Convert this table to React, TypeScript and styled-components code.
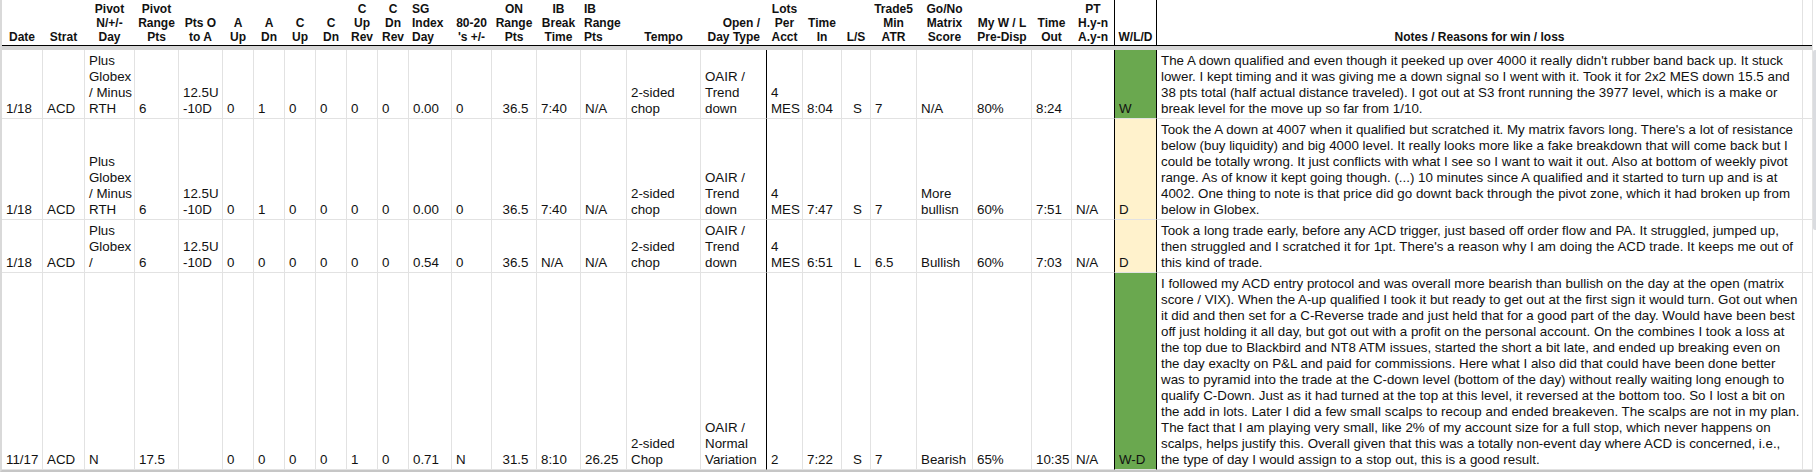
import React from "react";
import styled, { createGlobalStyle } from "styled-components";

type Align = "left" | "center" | "right";
type Edge = "grid" | "black" | "none";

interface Column {
  key: string;
  width: number;
  head: string[];
  headAlign?: Align;
  align?: Align;
  edge?: Edge; // right border in body rows
  headEdge?: Edge; // right border in the header row
}

interface Trade {
  height: number;
  result: "win" | "draw";
  cells: Record<string, string>;
}

const GRID = "#e2e2e2";

const columns: Column[] = [
  { key: "date", width: 41, head: ["Date"] },
  { key: "strat", width: 42, head: ["Strat"] },
  { key: "pivot", width: 50, head: ["Pivot", "N/+/-", "Day"] },
  { key: "pivotRange", width: 44, head: ["Pivot", "Range", "Pts"] },
  { key: "ptsO", width: 44, head: ["Pts O", "to A"] },
  { key: "aUp", width: 31, head: ["A", "Up"] },
  { key: "aDn", width: 31, head: ["A", "Dn"] },
  { key: "cUp", width: 31, head: ["C", "Up"] },
  { key: "cDn", width: 31, head: ["C", "Dn"] },
  { key: "cUpRev", width: 31, head: ["C", "Up", "Rev"] },
  { key: "cDnRev", width: 31, head: ["C", "Dn", "Rev"] },
  { key: "sg", width: 43, head: ["SG", "Index", "Day"], headAlign: "left" },
  { key: "eighty", width: 40, head: ["80-20", "'s +/-"] },
  { key: "on", width: 45, head: ["ON", "Range", "Pts"], align: "center" },
  { key: "ibBreak", width: 44, head: ["IB", "Break", "Time"] },
  { key: "ibRange", width: 46, head: ["IB", "Range", "Pts"], headAlign: "left" },
  { key: "tempo", width: 74, head: ["Tempo"] },
  { key: "open", width: 66, head: ["Open /", "Day Type"], headAlign: "right", edge: "black" },
  { key: "lots", width: 36, head: ["Lots", "Per", "Acct"] },
  { key: "timeIn", width: 39, head: ["Time", "In"] },
  { key: "ls", width: 29, head: ["L/S"], align: "center" },
  { key: "trade5", width: 46, head: ["Trade5", "Min", "ATR"] },
  { key: "goNo", width: 56, head: ["Go/No", "Matrix", "Score"] },
  { key: "myWL", width: 59, head: ["My W / L", "Pre-Disp"] },
  { key: "timeOut", width: 40, head: ["Time", "Out"] },
  { key: "pt", width: 43, head: ["PT", "H.y-n", "A.y-n"], edge: "black", headEdge: "black" },
  { key: "wld", width: 42, head: ["W/L/D"], edge: "black", headEdge: "black" },
  { key: "notes", width: 646, head: ["Notes / Reasons for win / loss"], headEdge: "grid" },
];

const template = `${columns.map((c) => `${c.width}px`).join(" ")} 9px`;

const trades: Trade[] = [
  {
    height: 69,
    result: "win",
    cells: {
      date: "1/18", strat: "ACD", pivot: "Plus Globex / Minus RTH", pivotRange: "6",
      ptsO: "12.5U -10D", aUp: "0", aDn: "1", cUp: "0", cDn: "0", cUpRev: "0", cDnRev: "0",
      sg: "0.00", eighty: "0", on: "36.5", ibBreak: "7:40", ibRange: "N/A",
      tempo: "2-sided chop", open: "OAIR / Trend down", lots: "4 MES", timeIn: "8:04",
      ls: "S", trade5: "7", goNo: "N/A", myWL: "80%", timeOut: "8:24", pt: "", wld: "W",
      notes:
        "The A down qualified and even though it peeked up over 4000 it really didn't rubber band back up. It stuck lower. I kept timing and it was giving me a down signal so I went with it. Took it for 2x2 MES down 15.5 and 38 pts total (half actual distance traveled). I got out at S3 front running the 3977 level, which is a make or break level for the move up so far from 1/10.",
    },
  },
  {
    height: 101,
    result: "draw",
    cells: {
      date: "1/18", strat: "ACD", pivot: "Plus Globex / Minus RTH", pivotRange: "6",
      ptsO: "12.5U -10D", aUp: "0", aDn: "1", cUp: "0", cDn: "0", cUpRev: "0", cDnRev: "0",
      sg: "0.00", eighty: "0", on: "36.5", ibBreak: "7:40", ibRange: "N/A",
      tempo: "2-sided chop", open: "OAIR / Trend down", lots: "4 MES", timeIn: "7:47",
      ls: "S", trade5: "7", goNo: "More bullisn", myWL: "60%", timeOut: "7:51", pt: "N/A", wld: "D",
      notes:
        "Took the A down at 4007 when it qualified but scratched it. My matrix favors long. There's a lot of resistance below (buy liquidity) and big 4000 level. It really looks more like a fake breakdown that will come back but I could be totally wrong. It just conflicts with what I see so I want to wait it out. Also at bottom of weekly pivot range. As of know it kept going though. (...) 10 minutes since A qualified and it started to turn up and is at 4002. One thing to note is that price did go downt back through the pivot zone, which it had broken up from below in Globex.",
    },
  },
  {
    height: 53,
    result: "draw",
    cells: {
      date: "1/18", strat: "ACD", pivot: "Plus Globex /", pivotRange: "6",
      ptsO: "12.5U -10D", aUp: "0", aDn: "0", cUp: "0", cDn: "0", cUpRev: "0", cDnRev: "0",
      sg: "0.54", eighty: "0", on: "36.5", ibBreak: "N/A", ibRange: "N/A",
      tempo: "2-sided chop", open: "OAIR / Trend down", lots: "4 MES", timeIn: "6:51",
      ls: "L", trade5: "6.5", goNo: "Bullish", myWL: "60%", timeOut: "7:03", pt: "N/A", wld: "D",
      notes:
        "Took a long trade early, before any ACD trigger, just based off order flow and PA. It struggled, jumped up, then struggled and I scratched it for 1pt. There's a reason why I am doing the ACD trade. It keeps me out of this kind of trade.",
    },
  },
  {
    height: 197,
    result: "win",
    cells: {
      date: "11/17", strat: "ACD", pivot: "N", pivotRange: "17.5",
      ptsO: "", aUp: "0", aDn: "0", cUp: "0", cDn: "0", cUpRev: "1", cDnRev: "0",
      sg: "0.71", eighty: "N", on: "31.5", ibBreak: "8:10", ibRange: "26.25",
      tempo: "2-sided Chop", open: "OAIR / Normal Variation", lots: "2", timeIn: "7:22",
      ls: "S", trade5: "7", goNo: "Bearish", myWL: "65%", timeOut: "10:35", pt: "N/A", wld: "W-D",
      notes:
        "I followed my ACD entry protocol and was overall more bearish than bullish on the day at the open (matrix score / VIX). When the A-up qualified I took it but ready to get out at the first sign it would turn. Got out when it did and then set for a C-Reverse trade and just held that for a good part of the day. Would have been best off just holding it all day, but got out with a profit on the personal account. On the combines I took a loss at the top due to Blackbird and NT8 ATM issues, started the short a bit late, and ended up breaking even on the day exaclty on P&L and paid for commissions. Here what I also did that could have been done better was to pyramid into the trade at the C-down level (bottom of the day) without really waiting long enough to qualify C-Down. Just as it had turned at the top at this level, it reversed at the bottom too. So I lost a bit on the add in lots. Later I did a few small scalps to recoup and ended breakeven. The scalps are not in my plan. The fact that I am playing very small, like 2% of my account size for a full stop, which never happens on scalps, helps justify this. Overall given that this was a totally non-event day where ACD is concerned, i.e., the type of day I would assign to a stop out, this is a good result.",
    },
  },
];

const resultFill = { win: "#6aa84f", draw: "#fff2cc" };

const edgeColor = (edge: Edge) =>
  edge === "black" ? "#000" : edge === "grid" ? GRID : "transparent";

const GlobalStyle = createGlobalStyle`
  * { box-sizing: border-box; }
  html, body {
    margin: 0;
    background: #fff;
  }
  body {
    font-family: "Liberation Sans", Arial, sans-serif;
    font-size: 10pt;
    color: #111;
  }
`;

const Page = styled.div`
  display: flex;
  width: 1816px;
  height: 472px;
  overflow: hidden;
  background: #fff;
`;

const Sheet = styled.div`
  display: flex;
  flex-direction: column;
  width: 1812px;
  border-left: 2px solid #d9d9d9;
  border-bottom: 2px solid #c6c6c6;
`;

const HeaderRow = styled.div`
  display: grid;
  grid-template-columns: ${template};
  height: 46px;
  border-bottom: 1px solid #000;
`;

const HeadCell = styled.div<{ $align: Align; $edge: Edge }>`
  display: flex;
  flex-direction: column;
  justify-content: flex-end;
  padding: ${(p) =>
    p.$align === "left" ? "0 1px 1px 3px" : p.$align === "right" ? "0 6px 1px 1px" : "0 1px 1px"};
  border-right: 1px solid ${(p) => edgeColor(p.$edge)};
  text-align: ${(p) => p.$align};
  font-size: 12px;
  font-weight: bold;
  line-height: 14px;
  color: #111;
`;

const HeadLine = styled.span`
  display: block;
  white-space: nowrap;
`;

const FreezeBand = styled.div`
  height: 4px;
  background: #d5d5d5;
`;

const DataRow = styled.div<{ $height: number }>`
  display: grid;
  grid-template-columns: ${template};
  height: ${(p) => p.$height}px;
`;

const Cell = styled.div<{ $align: Align; $edge: Edge; $fill?: string }>`
  display: flex;
  flex-direction: column;
  justify-content: flex-end;
  padding: 0 1px 1px 4px;
  border-right: 1px solid ${(p) => edgeColor(p.$edge)};
  border-bottom: 1px solid ${GRID};
  background: ${(p) => p.$fill ?? "#fff"};
  text-align: ${(p) => p.$align};
  line-height: 16px;
  overflow: hidden;
`;

const NoteCell = styled(Cell)`
  padding-right: 0.5px;
`;

const Filler = styled.div`
  border-bottom: 1px solid ${GRID};
`;

const ScrollTrack = styled.div`
  position: relative;
  flex: none;
  width: 4px;
  border-left: 1px solid #e3e3e3;
`;

const ScrollThumb = styled.div`
  position: absolute;
  top: 50px;
  left: 0;
  right: 0;
  height: 180px;
  background: #dadce0;
  border-radius: 2px 0 0 2px;
`;

const TradeRow: React.FC<{ trade: Trade }> = ({ trade }) => (
  <DataRow $height={trade.height}>
    {columns.map((col) => {
      const text = trade.cells[col.key];
      const align = col.align ?? "left";
      const edge = col.edge ?? "grid";
      if (col.key === "notes") {
        return (
          <NoteCell key={col.key} $align="left" $edge={edge}>
            <span>{text}</span>
          </NoteCell>
        );
      }
      return (
        <Cell
          key={col.key}
          $align={align}
          $edge={edge}
          $fill={col.key === "wld" ? resultFill[trade.result] : undefined}
        >
          <span>{text}</span>
        </Cell>
      );
    })}
    <Filler />
  </DataRow>
);

const App: React.FC = () => (
  <>
    <GlobalStyle />
    <Page>
      <Sheet>
        <HeaderRow>
          {columns.map((col) => (
            <HeadCell key={col.key} $align={col.headAlign ?? "center"} $edge={col.headEdge ?? "none"}>
              {col.head.map((line) => (
                <HeadLine key={line}>{line}</HeadLine>
              ))}
            </HeadCell>
          ))}
          <div />
        </HeaderRow>
        <FreezeBand />
        {trades.map((trade, i) => (
          <TradeRow key={i} trade={trade} />
        ))}
      </Sheet>
      <ScrollTrack>
        <ScrollThumb />
      </ScrollTrack>
    </Page>
  </>
);

export default App;
